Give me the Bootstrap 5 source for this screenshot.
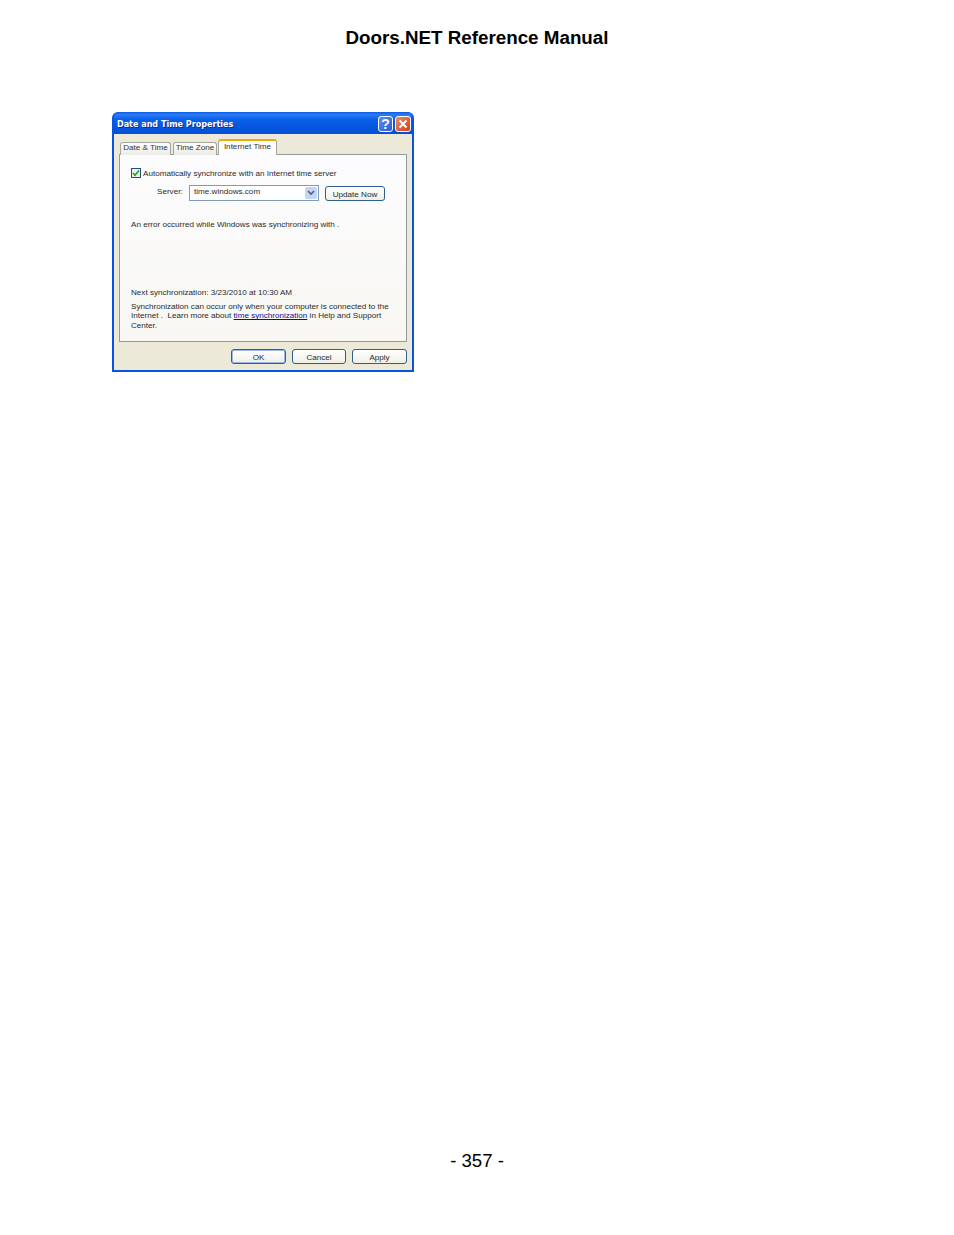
<!DOCTYPE html>
<html lang="en">
<head>
<meta charset="utf-8">
<title>Doors.NET Reference Manual</title>
<link href="https://cdn.jsdelivr.net/npm/bootstrap@5.3.0/dist/css/bootstrap.min.css" rel="stylesheet">
<style>
html,body{margin:0;background:#fff}
.sheet{height:1235px;font-family:"Liberation Sans",Arial,sans-serif;color:#000}
.doc-title{font-size:18.8px;font-weight:700;line-height:22px;padding-top:27px;height:112px;margin:0}
.doc-foot{font-size:18.6px;line-height:22px;padding-bottom:63px}
.xp-win{width:302px;height:260px;margin-left:112px;background:#0a53e0;border-radius:6px 6px 0 0;padding:0 2px 2px;font-size:8.1px;line-height:10px;color:#2a2a2a}
.xp-bar{height:22px;background:linear-gradient(180deg,#0a5ae6 0%,#2a7cf6 12%,#0a5fe8 35%,#0453dd 80%,#0a4fd0 100%);border-radius:5px 5px 0 0;padding:4px 1px 0 3px}
.xp-cap{color:#fff;font-family:"DejaVu Sans",sans-serif;font-weight:700;font-size:8.05px;text-shadow:1px 1px 0 #0a2f96;padding-top:4px}
.xp-ctl{width:15px;height:16px;border:1px solid #fff;border-radius:3px;color:#fff;font-weight:700;font-size:14px;line-height:14px;text-align:center}
.xp-help{margin-right:2px;background:linear-gradient(135deg,#5a8ff0,#2a5cd8)}
.xp-close{width:16px;background:linear-gradient(135deg,#ec8a6a,#d2401c);padding:2px}
.xp-body{height:236px;background:#ece9d8;padding:5px 5px 0 5px}
.xp-tabs{height:16px;padding-left:1px}
.xp-tab{height:13px;margin-top:3px;background:linear-gradient(180deg,#fff,#ecebe4);border:1px solid #a7a69a;border-bottom:0;border-radius:3px 3px 0 0;margin-right:2px;color:#333;text-align:center}
.xp-tab-a{width:51px}
.xp-tab-b{width:44px;margin-right:1px}
.xp-tab-on{width:59px;height:16px;margin-top:0;background:#fcfcfe;border-top:2px solid #f2a900;border-color:#f2a900 #a7a69a #fcfcfe;padding-top:1px;position:relative;z-index:1}
.xp-panel{height:188px;margin-top:-1px;background:linear-gradient(180deg,#fcfcfe 0%,#f8f7f2 100%);border:1px solid #919b9c;padding:13px 11px 0}
.xp-check{width:10px;height:10px;border:1px solid #1c5180;background:#eef0e8;margin-right:2px;flex:none}
.xp-check-label{padding-top:1px}
.xp-srv{margin:6px 0 0 26px;height:16px}
.xp-srv-label{width:32px;padding-top:2px}
.xp-combo{width:130px;height:16px;border:1px solid #7f9db9;background:#fff;padding:1px 0 0 4px}
.xp-arrow{width:12px;height:12px;margin:0 1px 0 0;background:#c5d3f5;border-radius:2px;flex:none}
.xp-btn{height:15px;border:1px solid #2f5f8f;border-radius:3px;background:linear-gradient(180deg,#fff,#f0efe6);font-size:8.1px;line-height:14px;text-align:center;padding:1px 0 0;color:#2a2a2a}
.xp-update{width:60px;margin:1px 0 0 6px}
.xp-err{margin-top:19px}
.xp-next{margin-top:58px}
.xp-sync{margin-top:4px;line-height:9.4px;width:262px}
.xp-sync a{color:#00129a}
.xp-foot{padding:7px 0 0;gap:6px}
.xp-foot .xp-btn{width:55px}
.xp-foot .xp-cancel{width:54px}
.xp-foot .xp-ok{box-shadow:inset 0 0 0 1px #9db8e6}
</style>
</head>
<body>
<div class="sheet d-flex flex-column">
  <h1 class="doc-title text-center">Doors.NET Reference Manual</h1>
  <div class="xp-win">
    <div class="xp-bar d-flex align-items-start">
      <div class="xp-cap flex-grow-1">Date and Time Properties</div>
      <div class="xp-ctl xp-help">?</div>
      <div class="xp-ctl xp-close"><svg class="d-block" width="10" height="10" viewBox="0 0 10 10"><path d="M1.500 1.500l7 7M8.500 1.500l-7 7" stroke="#fff" stroke-width="2" fill="none"/></svg></div>
    </div>
    <div class="xp-body">
      <div class="xp-tabs d-flex align-items-start">
        <div class="xp-tab xp-tab-a">Date &amp; Time</div>
        <div class="xp-tab xp-tab-b">Time Zone</div>
        <div class="xp-tab xp-tab-on">Internet Time</div>
      </div>
      <div class="xp-panel">
        <div class="d-flex align-items-start">
          <span class="xp-check d-flex"><svg width="8" height="8" viewBox="0 0 8 8"><path d="M1 4l2 2.200L7 1.500" stroke="#21a121" stroke-width="1.600" fill="none"/></svg></span>
          <span class="xp-check-label">Automatically synchronize with an Internet time server</span>
        </div>
        <div class="xp-srv d-flex">
          <span class="xp-srv-label">Server:</span>
          <div class="xp-combo d-flex justify-content-between"><span>time.windows.com</span><span class="xp-arrow d-flex align-items-center justify-content-center"><svg width="8" height="6" viewBox="0 0 8 6"><path d="M1 1l3 3 3-3" stroke="#4d6185" stroke-width="1.600" fill="none"/></svg></span></div>
          <button type="button" class="xp-btn xp-update">Update Now</button>
        </div>
        <div class="xp-err">An error occurred while Windows was synchronizing with .</div>
        <div class="xp-next">Next synchronization: 3/23/2010 at 10:30 AM</div>
        <div class="xp-sync">Synchronization can occur only when your computer is connected to the Internet .&nbsp; Learn more about <a href="#">time synchronization</a> in Help and Support Center.</div>
      </div>
      <div class="xp-foot d-flex justify-content-end">
        <button type="button" class="xp-btn xp-ok">OK</button>
        <button type="button" class="xp-btn xp-cancel">Cancel</button>
        <button type="button" class="xp-btn">Apply</button>
      </div>
    </div>
  </div>
  <div class="doc-foot text-center mt-auto">- 357 -</div>
</div>
<script src="https://cdn.jsdelivr.net/npm/bootstrap@5.3.0/dist/js/bootstrap.bundle.min.js"></script>
</body>
</html>
